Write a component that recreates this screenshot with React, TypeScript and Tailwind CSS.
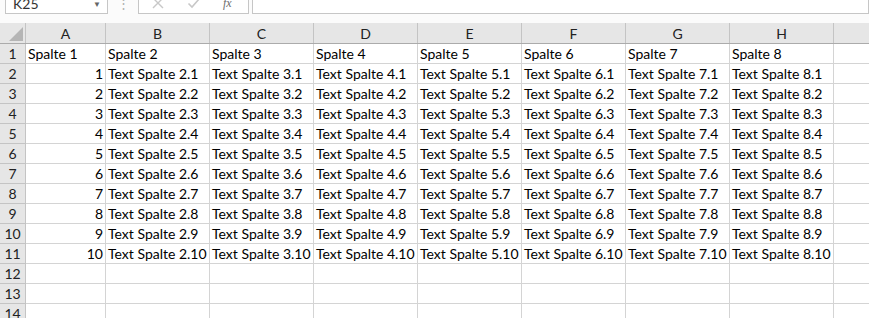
import React from 'react';

const cols = ['A', 'B', 'C', 'D', 'E', 'F', 'G', 'H'];
const font = { fontFamily: 'Lato, "Liberation Sans", sans-serif' };

function cellText(row: number, col: number): string {
  if (row === 1) return `Spalte ${col + 1}`;
  if (row > 11) return '';
  if (col === 0) return String(row - 1);
  return `Text Spalte ${col + 1}.${row - 1}`;
}

function FormulaBar() {
  return (
    <div className="h-[23px] bg-[#fbfbfb] relative overflow-hidden">
      <div className="flex items-end h-[25px] -mt-[11px]">
        <div className="ml-[5px] w-[103px] h-full bg-white border border-[#c6c6c6] flex items-center justify-between pl-[7px] pr-[6px] text-[14px] text-[#333]">
          <span className="pt-[4px]">K25</span>
          <span className="text-[8px] text-[#666] pt-[4px]">▼</span>
        </div>
        <div className="w-[30px] h-full flex items-center justify-center text-[#b0b0b0] text-[13px] pt-[4px]">⋮</div>
        <div className="w-[111px] h-full bg-white border border-[#c6c6c6] flex items-center pl-[12px] pt-[2px]">
          <svg width="14" height="14" viewBox="0 0 14 14" className="mr-[22px]">
            <path d="M2 2 L12 12 M12 2 L2 12" stroke="#c8c8c8" strokeWidth="1.4" fill="none" />
          </svg>
          <svg width="14" height="14" viewBox="0 0 14 14" className="mr-[22px]">
            <path d="M1.5 7.5 L5 11 L12.5 2.5" stroke="#c8c8c8" strokeWidth="1.6" fill="none" />
          </svg>
          <span className="italic text-[12px] text-[#6e6e6e]" style={{ fontFamily: '"Liberation Serif", serif' }}>
            fx
          </span>
        </div>
        <div className="ml-[3px] flex-1 h-full bg-white border border-[#c6c6c6]" />
      </div>
    </div>
  );
}

export default function App() {
  const rows = Array.from({ length: 14 }, (_, i) => i + 1);

  return (
    <div className="w-[869px] h-[318px] overflow-hidden bg-white" style={font}>
      <FormulaBar />
      <div className="flex h-[21px] bg-[#e6e6e6] border-b border-[#ababab] text-[14px] text-[#222]">
        <div className="w-[26px] shrink-0 border-r border-[#c4c4c4] relative">
          <svg width="14" height="14" viewBox="0 0 14 14" className="absolute right-[2px] bottom-[2px]">
            <path d="M14 0 L14 14 L0 14 Z" fill="#b5b5b5" />
          </svg>
        </div>
        {cols.map((c, i) => (
          <div
            key={c}
            className={`${i === 0 ? 'w-[80px]' : 'w-[104px]'} shrink-0 border-r border-[#c4c4c4] flex items-center justify-center`}
          >
            {c}
          </div>
        ))}
        <div className="flex-1" />
      </div>
      {rows.map((r) => (
        <div key={r} className="flex h-[20px] text-[14px]">
          <div className="w-[26px] shrink-0 bg-[#e6e6e6] border-r border-b border-[#c4c4c4] flex items-center justify-center text-[#222]">
            {r}
          </div>
          {cols.map((c, i) => {
            const t = cellText(r, i);
            const isNum = i === 0 && r > 1;
            return (
              <div
                key={c}
                className={`${i === 0 ? 'w-[80px]' : 'w-[104px]'} shrink-0 border-r border-b border-[#d4d4d4] flex items-center px-[2px] whitespace-nowrap overflow-hidden text-black ${isNum ? 'justify-end' : 'justify-start'}`}
              >
                {t}
              </div>
            );
          })}
          <div className="flex-1 border-b border-[#d4d4d4]" />
        </div>
      ))}
    </div>
  );
}
